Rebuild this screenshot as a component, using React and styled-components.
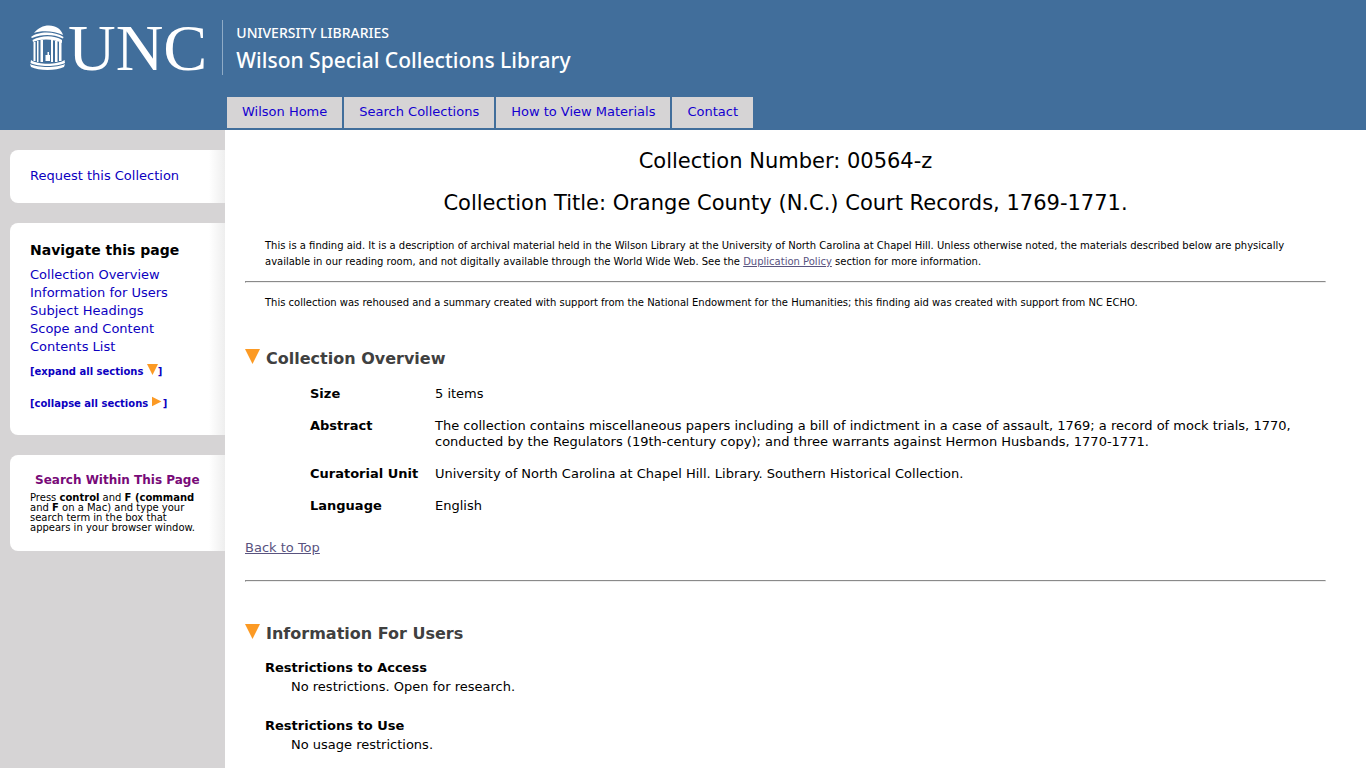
import React from "react";
import styled, { createGlobalStyle } from "styled-components";

const GlobalStyle = createGlobalStyle`
  * { box-sizing: border-box; }
  body {
    margin: 0;
    background: #d6d4d5;
    color: #000;
    font-family: Verdana, "DejaVu Sans", sans-serif;
    font-size: 13px;
    line-height: 16px;
  }
`;

const Page = styled.div`
  display: flex;
  flex-direction: column;
  min-height: 100vh;
`;

const Header = styled.header`
  background: #416e9b;
  padding: 20px 0 2px 30px;
`;

const Brand = styled.a`
  display: flex;
  align-items: center;
  height: 55px;
  color: #fff;
  text-decoration: none;
`;

const Wordmark = styled.span`
  margin-left: 2px;
  font: 66px/55px "Liberation Serif", "Times New Roman", serif;
`;

const BrandText = styled.span`
  display: flex;
  flex-direction: column;
  justify-content: center;
  height: 55px;
  margin-left: 15px;
  padding-left: 13px;
  border-left: 1px solid #8fabc6;
  font-family: "Noto Sans", "Open Sans", sans-serif;
  font-weight: 500;
`;

const Department = styled.span`
  font-size: 14px;
  line-height: 24px;
`;

const Library = styled.span`
  font-size: 21px;
  line-height: 30px;
`;

const Tabs = styled.nav`
  display: flex;
  gap: 2px;
  margin: 22px 0 0 197px;
`;

const Tab = styled.a`
  padding: 7px 15px 8px;
  background: #d6d4d5;
  color: #1400d0;
  text-decoration: none;
`;

const Columns = styled.div`
  display: flex;
  flex: 1;
`;

const Sidebar = styled.aside`
  display: flex;
  flex-direction: column;
  gap: 20px;
  flex: 0 0 225px;
  padding: 20px 0 20px 10px;
`;

const Panel = styled.section`
  padding: 17px 20px 18px;
  border-radius: 8px 0 0 8px;
  background: linear-gradient(to right, #fff calc(100% - 16px), #eee);
`;

const PanelTitle = styled.h2`
  margin: 0 0 6px;
  font-size: 14px;
  line-height: 20px;
`;

const LinkList = styled.ul`
  margin: 0;
  padding: 0;
  list-style: none;
  line-height: 18px;
`;

const SideLink = styled.a`
  color: #0c00c0;
  text-decoration: none;
`;

const Toggle = styled.button`
  display: block;
  padding: 0;
  border: 0;
  background: none;
  color: #0c00c0;
  font: bold 10px/16px Verdana, "DejaVu Sans", sans-serif;
  cursor: pointer;
`;

const Toggles = styled.div`
  display: flex;
  flex-direction: column;
  align-items: flex-start;
  gap: 16px;
  padding: 8px 0 5px;
`;

const SearchTitle = styled.h2`
  margin: 0 0 5px 5px;
  color: #780a78;
  font-size: 12px;
  line-height: 16px;
  white-space: nowrap;
`;

const SearchHint = styled.p`
  margin: 0;
  font-size: 10px;
  line-height: 10px;
`;

const Main = styled.main`
  flex: 1;
  min-width: 0;
  padding: 17px 40px 0 20px;
  background: #fff;
`;

const Title = styled.h1`
  margin: 0 0 14px;
  font-size: 21px;
  font-weight: normal;
  line-height: 28px;
  text-align: center;
`;

const Note = styled.p`
  margin: 0;
  padding: 0 20px;
  font-size: 10px;
`;

const Intro = styled.div`
  padding-top: 7px;
`;

const Rule = styled.hr`
  height: 2px;
  margin: ${(p) => (p.$wide ? "24px 0 40px" : "11px 0 12px")};
  border: 1px solid;
  border-color: #8a8a8a #eee #eee #8a8a8a;
`;

const SectionTitle = styled.h2`
  display: flex;
  align-items: baseline;
  gap: 6px;
  margin: 0;
  color: #404040;
  font-size: 16px;
  line-height: 24px;
`;

const Section = styled.section`
  padding-top: ${(p) => (p.$first ? "36px" : "0")};
`;

const Overview = styled.table`
  margin: 7px 0 18px 63px;
  border-spacing: 0;
  th {
    width: 127px;
    padding: 8px 0 8px 2px;
    text-align: left;
    vertical-align: top;
    white-space: nowrap;
  }
  td {
    padding: 8px 0;
    vertical-align: top;
  }
`;

const TextLink = styled.a`
  color: #59537f;
`;

const Restrictions = styled.dl`
  margin: 14px 0 0;
  padding-left: 20px;
  dt { font-weight: bold; }
  dd { margin: 3px 0 23px 26px; }
  dd:last-child { margin-bottom: 14px; }
`;

const OldWell = () => (
  <svg width="36" height="45" viewBox="0 0 36 45" fill="#fff" aria-hidden="true">
    <path d="M4 8C8 3 13 0.500 19 0.500C26 0.500 31 4 33 10C25 6 12 5 4 8Z" />
    <path d="M1 12C8 6 25 6 33.500 12L33 13.500C23 9 12 9 2 13Z" />
    <path d="M2.500 15C12 10 24 10 32 15V18C24 14 12 13 3 17Z" />
    <path d="M3.500 17H5.500V36H3.500ZM7 16H8.500V37H7ZM10.500 15H13V37H10.500ZM21 15H23V37H21ZM25 16H27.500V37H25ZM29 17H31.500V36H29Z" />
    <path d="M17.500 27H19V30H20V36H15.500V30H17.500Z" />
    <path d="M1 35C8 40 27 40 34.500 35L35 38C27 42 8 42 0.500 38Z" />
    <path d="M0 39C8 43 27 43 35 39L34 42C26 46 9 46 1 42Z" />
  </svg>
);

const Arrow = ({ size = 11, right }) => (
  <svg width={size} height={size} viewBox="0 0 14 14" fill="#fc9a24" aria-hidden="true">
    <path d={right ? "M0 1L12 7L0 13Z" : "M0 0H14L7 14Z"} />
  </svg>
);

const tabs = ["Wilson Home", "Search Collections", "How to View Materials", "Contact"];
const pageLinks = [
  ["Collection Overview", "#overview"],
  ["Information for Users", "#users"],
  ["Subject Headings", "#subjects"],
  ["Scope and Content", "#scope"],
  ["Contents List", "#contents"],
];
const overview = [
  ["Size", "5 items"],
  ["Abstract", "The collection contains miscellaneous papers including a bill of indictment in a case of assault, 1769; a record of mock trials, 1770, conducted by the Regulators (19th-century copy); and three warrants against Hermon Husbands, 1770-1771."],
  ["Curatorial Unit", "University of North Carolina at Chapel Hill. Library. Southern Historical Collection."],
  ["Language", "English"],
];

export default function App() {
  return (
    <Page id="top">
      <GlobalStyle />
      <Header>
        <Brand href="#top">
          <OldWell />
          <Wordmark>UNC</Wordmark>
          <BrandText>
            <Department>UNIVERSITY LIBRARIES</Department>
            <Library>Wilson Special Collections Library</Library>
          </BrandText>
        </Brand>
        <Tabs>
          {tabs.map((t) => <Tab key={t} href="#top">{t}</Tab>)}
        </Tabs>
      </Header>
      <Columns>
        <Sidebar>
          <Panel>
            <LinkList>
              <li><SideLink href="#top">Request this Collection</SideLink></li>
            </LinkList>
          </Panel>
          <Panel>
            <PanelTitle>Navigate this page</PanelTitle>
            <LinkList>
              {pageLinks.map(([t, h]) => <li key={t}><SideLink href={h}>{t}</SideLink></li>)}
            </LinkList>
            <Toggles>
              <Toggle type="button">[expand all sections <Arrow />]</Toggle>
              <Toggle type="button">[collapse all sections <Arrow right />]</Toggle>
            </Toggles>
          </Panel>
          <Panel>
            <SearchTitle>Search Within This Page</SearchTitle>
            <SearchHint>
              Press <b>control</b> and <b>F (command</b> and <b>F</b> on a Mac) and type your search term in the box that appears in your browser window.
            </SearchHint>
          </Panel>
        </Sidebar>
        <Main>
          <Title>Collection Number: 00564-z</Title>
          <Title>Collection Title: Orange County (N.C.) Court Records, 1769-1771.</Title>
          <Intro>
            <Note>
              This is a finding aid. It is a description of archival material held in the Wilson Library at the University of North Carolina at Chapel Hill. Unless otherwise noted, the materials described below are physically available in our reading room, and not digitally available through the World Wide Web. See the <TextLink href="#policy">Duplication Policy</TextLink> section for more information.
            </Note>
          </Intro>
          <Rule />
          <Note>This collection was rehoused and a summary created with support from the National Endowment for the Humanities; this finding aid was created with support from NC ECHO.</Note>
          <Section id="overview" $first>
            <SectionTitle><Arrow size={15} />Collection Overview</SectionTitle>
            <Overview>
              <tbody>
                {overview.map(([k, v]) => (
                  <tr key={k}><th scope="row">{k}</th><td>{v}</td></tr>
                ))}
              </tbody>
            </Overview>
            <TextLink href="#top">Back to Top</TextLink>
          </Section>
          <Rule $wide />
          <Section id="users">
            <SectionTitle><Arrow size={15} />Information For Users</SectionTitle>
            <Restrictions>
              <dt>Restrictions to Access</dt>
              <dd>No restrictions. Open for research.</dd>
              <dt>Restrictions to Use</dt>
              <dd>No usage restrictions.</dd>
            </Restrictions>
          </Section>
        </Main>
      </Columns>
    </Page>
  );
}
